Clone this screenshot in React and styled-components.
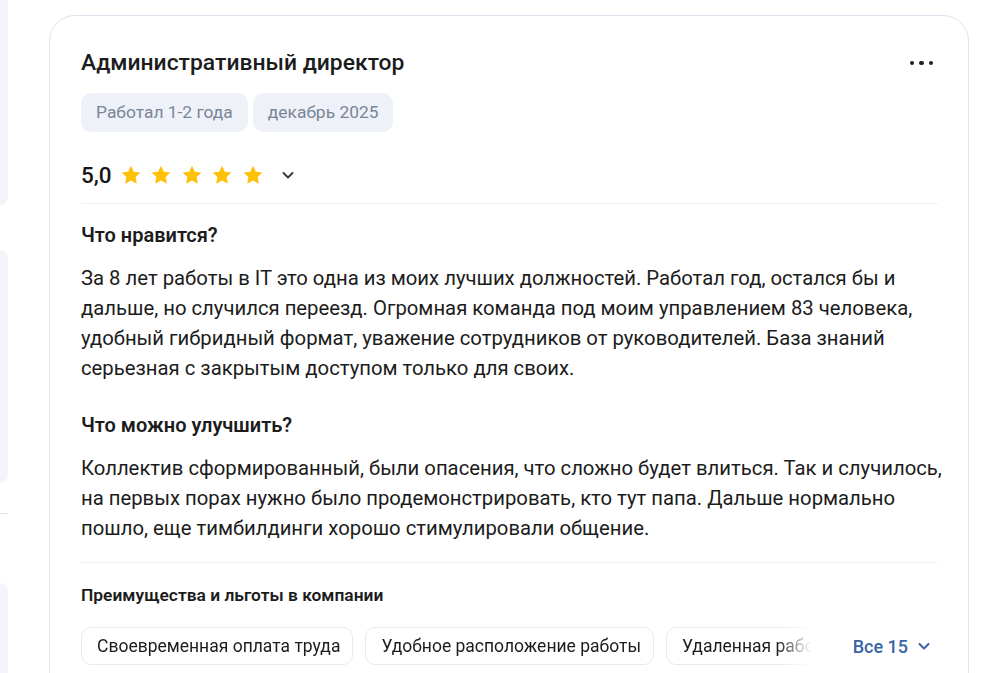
import React from "react";
import styled, { createGlobalStyle } from "styled-components";

const Global = createGlobalStyle`
  html, body { margin: 0; padding: 0; background: #ffffff; }
  body { font-family: Roboto, "Noto Sans", Arial, sans-serif; color: #1f1f1f; overflow: hidden; }
  * { box-sizing: border-box; }
`;

const Page = styled.div`
  display: flex;
  align-items: flex-start;
  height: 673px;
  overflow: hidden;
`;

const SideStrip = styled.div`
  width: 8px;
  flex: none;
  display: flex;
  flex-direction: column;
`;

const SidePanel = styled.div`
  width: 8px;
  height: ${(p) => p.$h}px;
  margin-top: ${(p) => p.$mt || 0}px;
  background: #f4f5fa;
  border-radius: ${(p) => (p.$top ? "0 0 8px 0" : "0 8px 8px 0")};
`;

const SideLine = styled.div`
  width: 8px;
  height: 1px;
  margin-top: ${(p) => p.$mt}px;
  background: #e2e5ec;
`;

const Card = styled.div`
  margin-left: 41px;
  margin-top: 15px;
  width: 920px;
  height: 700px;
  flex: none;
  border: 1px solid #dee2ec;
  border-radius: 26px;
  padding: 32px 30px 0 31px;
`;

const HeaderRow = styled.div`
  display: flex;
  align-items: center;
  justify-content: space-between;
`;

const Title = styled.h2`
  margin: 0;
  font-size: 22.9px;
  line-height: 30px;
  font-weight: 500;
  color: #1c1c1c;
`;

const MoreButton = styled.button`
  border: 0;
  background: none;
  padding: 0;
  margin-right: 5px;
  display: flex;
  gap: 5px;
  align-items: center;
  cursor: pointer;
`;

const Dot = styled.span`
  width: 4.5px;
  height: 4.5px;
  border-radius: 50%;
  background: #1d1f2b;
`;

const TagRow = styled.div`
  display: flex;
  gap: 5px;
  margin-top: 15px;
`;

const Tag = styled.span`
  height: 39px;
  padding: 0 15px;
  border-radius: 10px;
  background: #eef1f7;
  color: #7a8598;
  font-size: 17.4px;
  line-height: 39px;
`;

const RatingRow = styled.div`
  display: flex;
  align-items: center;
  height: 28px;
  margin-top: 29px;
`;

const Score = styled.span`
  font-size: 22.5px;
  font-weight: 500;
  color: #151515;
  margin-right: 8px;
`;

const Stars = styled.div`
  display: flex;
  gap: 8.5px;
`;

const Expand = styled.span`
  display: flex;
  margin-left: 17px;
  color: #3a3a3a;
`;

const Divider = styled.div`
  height: 1px;
  background: #eef0f5;
  margin-top: ${(p) => p.$mt}px;
`;

const SectionTitle = styled.h3`
  margin: ${(p) => p.$mt}px 0 0;
  font-size: ${(p) => p.$size || 20}px;
  line-height: 24px;
  font-weight: 600;
  color: #1c1c1c;
`;

const Paragraph = styled.p`
  margin: 16px -6px 0 0;
  font-size: 20.3px;
  line-height: 30px;
  color: #1c1c1c;
`;

const BenefitsRow = styled.div`
  display: flex;
  align-items: center;
  margin-top: 20px;
`;

const ChipScroller = styled.div`
  flex: 1;
  min-width: 0;
  display: flex;
  gap: 12px;
  overflow: hidden;
  -webkit-mask-image: linear-gradient(to right, #000 calc(100% - 34px), transparent);
  mask-image: linear-gradient(to right, #000 calc(100% - 34px), transparent);
`;

const Chip = styled.span`
  flex: none;
  height: 38px;
  padding: 0 12px 0 15px;
  border: 1px solid #e6e9f0;
  border-radius: 10px;
  background: #fff;
  font-size: 17.5px;
  line-height: 36px;
  color: #1c1c1c;
  white-space: nowrap;
`;

const AllButton = styled.button`
  flex: none;
  margin-left: 42px;
  margin-right: 7px;
  border: 0;
  background: none;
  padding: 0;
  display: flex;
  align-items: center;
  gap: 9px;
  font-family: inherit;
  font-size: 18px;
  font-weight: 500;
  color: #3a63a8;
  cursor: pointer;
`;

const Star = () => (
  <svg width="22" height="22" viewBox="0 0 24 24">
    <path
      d="M12 1.8l3.1 6.6 7.2.9-5.3 5 1.4 7.2L12 18 5.6 21.5 7 14.3l-5.3-5 7.2-.9z"
      fill="#ffc107"
    />
  </svg>
);

const Chevron = ({ color = "currentColor", size = 14 }) => (
  <svg width={size} height={size} viewBox="0 0 14 14" fill="none">
    <path d="M2.5 5l4.5 4.5L11.5 5" stroke={color} strokeWidth="2" strokeLinecap="round" strokeLinejoin="round" />
  </svg>
);

export default function App() {
  return (
    <>
      <Global />
      <Page>
        <SideStrip>
          <SidePanel $h={205} $top />
          <SidePanel $h={233} $mt={45} />
          <SideLine $mt={30} />
          <SidePanel $h={120} $mt={69} />
        </SideStrip>
        <Card>
          <HeaderRow>
            <Title>Административный директор</Title>
            <MoreButton aria-label="Ещё">
              <Dot />
              <Dot />
              <Dot />
            </MoreButton>
          </HeaderRow>
          <TagRow>
            <Tag>Работал 1-2 года</Tag>
            <Tag>декабрь 2025</Tag>
          </TagRow>
          <RatingRow>
            <Score>5,0</Score>
            <Stars>
              <Star />
              <Star />
              <Star />
              <Star />
              <Star />
            </Stars>
            <Expand>
              <Chevron size={14} />
            </Expand>
          </RatingRow>
          <Divider $mt={14} />
          <SectionTitle $mt={19}>Что нравится?</SectionTitle>
          <Paragraph>
            За 8 лет работы в IT это одна из моих лучших должностей. Работал год, остался бы и
            дальше, но случился переезд. Огромная команда под моим управлением 83 человека,
            удобный гибридный формат, уважение сотрудников от руководителей. База знаний
            серьезная с закрытым доступом только для своих.
          </Paragraph>
          <SectionTitle $mt={30}>Что можно улучшить?</SectionTitle>
          <Paragraph>
            Коллектив сформированный, были опасения, что сложно будет влиться. Так и случилось,
            на первых порах нужно было продемонстрировать, кто тут папа. Дальше нормально
            пошло, еще тимбилдинги хорошо стимулировали общение.
          </Paragraph>
          <Divider $mt={19} />
          <SectionTitle $mt={20} $size={17.4}>Преимущества и льготы в компании</SectionTitle>
          <BenefitsRow>
            <ChipScroller>
              <Chip>Своевременная оплата труда</Chip>
              <Chip>Удобное расположение работы</Chip>
              <Chip>Удаленная работа</Chip>
              <Chip>Гибкий график</Chip>
            </ChipScroller>
            <AllButton>
              Все 15
              <Chevron size={14} />
            </AllButton>
          </BenefitsRow>
        </Card>
      </Page>
    </>
  );
}
